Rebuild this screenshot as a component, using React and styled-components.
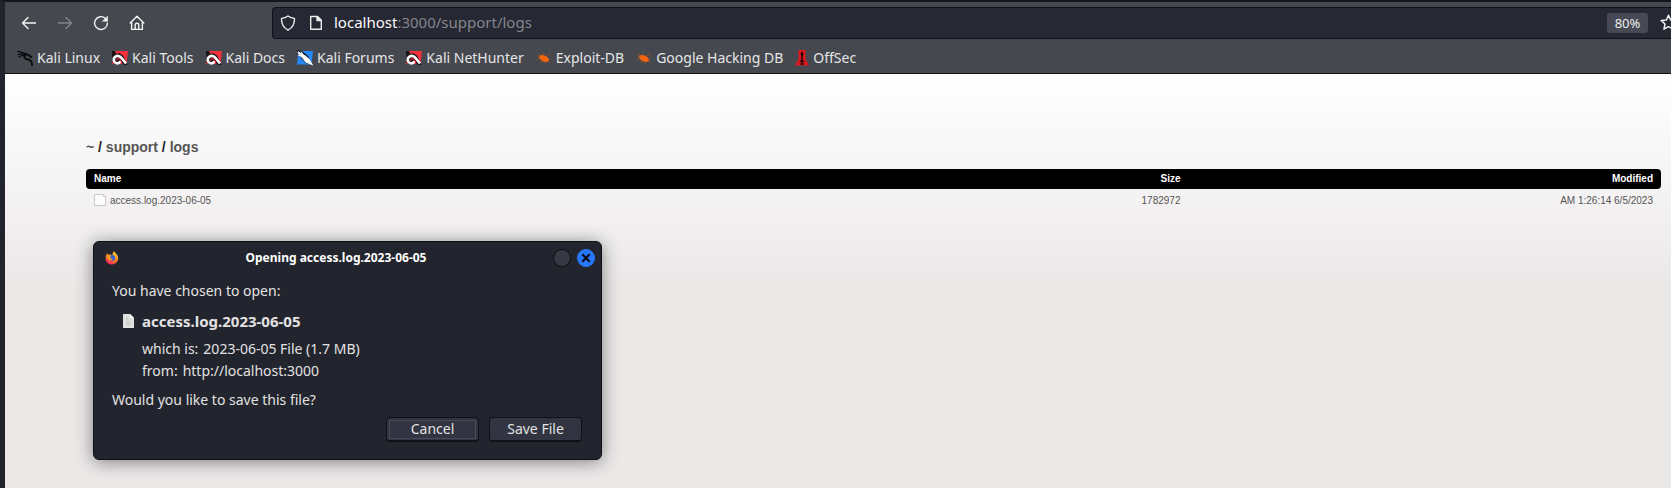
import React from 'react';
import styled, { createGlobalStyle, css } from 'styled-components';

const Global = createGlobalStyle`
  * { box-sizing: border-box; }
  html, body { margin: 0; height: 100%; }
  body { background: #ebe9e8; overflow: hidden; }
  #root { height: 100%; }
`;

const uiFont = css`font-family: "Noto Sans", "Open Sans", sans-serif;`;

const Browser = styled.div`
  position: relative;
  display: flex;
  flex-direction: column;
  min-height: 100vh;
  border-top: 2px solid #14161c;
  border-left: 5px solid #22242d;
  box-shadow: inset 1px 0 #14161c;
`;
const Chrome = styled.header`
  ${uiFont}
  background: #45484f;
  border-bottom: 1px solid #0e0f13;
  color: #eceded;
`;
const NavRow = styled.div`
  display: flex;
  align-items: center;
  height: 38px;
  padding-top: 3px;
`;
const NavButtons = styled.nav`
  display: flex;
  gap: 20px;
  width: 267px;
  padding-left: 16px;
`;
const IconButton = styled.button`
  display: flex;
  padding: 0;
  border: 0;
  background: none;
  color: #f4f4f4;
  opacity: ${(p) => (p.disabled ? 0.35 : 1)};
`;
const UrlBar = styled.div`
  flex: 1;
  display: flex;
  align-items: center;
  height: 32px;
  padding-left: 7px;
  background: #262833;
  border: 1px solid #101218;
  border-right: 0;
  border-radius: 4px 0 0 4px;
  overflow: hidden;
`;
const UrlIcons = styled.div`
  display: flex;
  gap: 12px;
  margin-right: 10px;
`;
const Url = styled.div`
  position: relative;
  flex: 1;
  font-size: 15px;
  line-height: 20px;
  padding-bottom: 2px;
  color: #84858c;
  b { font-weight: 400; color: #fbfbfe; }
`;
const UrlInput = styled.input`
  position: absolute;
  inset: 0;
  width: 100%;
  padding: 0;
  border: 0;
  background: none;
  outline: none;
  color: transparent;
  font: inherit;
`;
const Zoom = styled.button`
  ${uiFont}
  width: 41px;
  height: 20px;
  margin-right: 12px;
  padding: 0;
  border: 0;
  border-radius: 3px;
  background: #474a55;
  color: #eeeeee;
  font-size: 13px;
  line-height: 20px;
`;
const StarButton = styled(IconButton)`
  margin-right: -6px;
`;
const Bookmarks = styled.nav`
  display: flex;
  align-items: center;
  gap: 12px;
  height: 33px;
  padding: 2px 0 0 12px;
`;
const Bookmark = styled.a`
  display: flex;
  align-items: center;
  gap: 4px;
  color: #e6e6e6;
  font-size: 14px;
  line-height: 20px;
  white-space: nowrap;
  text-decoration: none;
`;
const Page = styled.main`
  flex: 1;
  padding: 64px 10px 0 81px;
  background: linear-gradient(#ffffff 0, #f3f1f1 130px, #ebe9e8 210px);
  font-family: "Liberation Sans", Arial, sans-serif;
  font-size: 10px;
  color: #555555;
`;
const Crumbs = styled.h1`
  margin: 0;
  font-size: 14px;
  line-height: 18px;
  color: #222222;
  a { color: #555555; text-decoration: none; }
`;
const Files = styled.table`
  width: 100%;
  margin-top: 13px;
  border-collapse: separate;
  border-spacing: 0;
  table-layout: fixed;
`;
const Head = styled.th`
  height: 20px;
  padding: 0 8px;
  background: #000000;
  color: #ffffff;
  line-height: 18px;
  width: ${(p) => p.$width};
  text-align: ${(p) => p.$align || 'right'};
  &:first-child { border-radius: 4px 0 0 4px; }
  &:last-child { border-radius: 0 4px 4px 0; }
`;
const Cell = styled.td`
  height: 22px;
  padding: 0 8px;
  text-align: ${(p) => p.$align || 'right'};
`;
const FileLink = styled.a`
  display: flex;
  align-items: center;
  gap: 4px;
  color: #555555;
  text-decoration: none;
`;
const Dialog = styled.section`
  ${uiFont}
  position: absolute;
  left: 88px;
  top: 239px;
  width: 509px;
  padding-bottom: 17px;
  background: #23252e;
  border: 1px solid #0f1116;
  border-radius: 6px;
  box-shadow: 0 2px 18px rgba(0, 0, 0, 0.45);
  color: #e2e2e2;
  font-size: 14px;
  line-height: 22px;
`;
const TitleBar = styled.header`
  display: flex;
  align-items: center;
  height: 31px;
  padding: 0 6px 0 11px;
`;
const Title = styled.h2`
  flex: 1;
  margin: 0;
  text-align: center;
  font-size: 12px;
  line-height: 20px;
  color: #ffffff;
`;
const WindowButtons = styled.div`
  display: flex;
  gap: 6px;
`;
const RoundButton = styled.button`
  display: flex;
  align-items: center;
  justify-content: center;
  width: 18px;
  height: 18px;
  padding: 0;
  border: 1px solid ${(p) => (p.$primary ? '#2777ff' : '#0b0c10')};
  border-radius: 50%;
  background: ${(p) => (p.$primary ? '#2777ff' : '#363944')};
  color: #0b0c14;
`;
const Body = styled.div`
  padding: 7px 19px 0 18px;
  p { margin: 0; }
`;
const FileName = styled.p`
  display: flex;
  align-items: center;
  gap: 7px;
  padding: 8px 0 6px 10px;
  font-size: 15px;
  font-weight: 700;
`;
const Details = styled.dl`
  margin: 0 0 7px 30px;
  div { display: flex; gap: 5px; }
  dt, dd { margin: 0; }
`;
const Actions = styled.div`
  display: flex;
  justify-content: flex-end;
  gap: 10px;
  padding-top: 6px;
`;
const Button = styled.button`
  ${uiFont}
  width: 93px;
  height: 25px;
  padding: 0;
  border: 1px solid #0f1116;
  border-bottom-width: 2px;
  border-radius: 4px;
  background: #323541;
  color: #e2e2e2;
  font-size: 14px;
  line-height: 20px;
  outline: ${(p) => (p.$focused ? '1px solid #484b57' : 'none')};
  outline-offset: -4px;
`;

const line = { fill: 'none', stroke: 'currentColor', strokeWidth: 1.4, strokeLinecap: 'round', strokeLinejoin: 'round' };
const Back = () => <svg width="16" height="16" viewBox="0 0 16 16" {...line}><path d="M14.5 8H1.7M7 2.5 1.5 8 7 13.5" /></svg>;
const Forward = () => <svg width="16" height="16" viewBox="0 0 16 16" {...line}><path d="M1.5 8h12.8M9 2.5 14.5 8 9 13.5" /></svg>;
const Reload = () => <svg width="16" height="16" viewBox="0 0 16 16" {...line}><path d="M14.4 8.2A6.4 6.4 0 1 1 12.5 3.5L14 5" /><path d="M14.5 1.5v4.8H9.7z" fill="currentColor" strokeWidth=".6" /></svg>;
const Home = () => <svg width="16" height="16" viewBox="0 0 16 16" {...line}><path d="M1.2 8 8 1.3 14.8 8M2.6 7v7.4h10.8V7M6.2 14.2V10a1.8 1.8 0 0 1 3.6 0v4.2" /></svg>;
const Shield = () => <svg width="16" height="16" viewBox="0 0 16 16" {...line}><path d="M8 1c2 1.5 4 2.2 6.500 2.400C14.700 8.500 13 12.500 8 15.200 3 12.500 1.300 8.500 1.500 3.400 4 3.200 6 2.500 8 1z" /></svg>;
const PageIcon = () => <svg width="16" height="16" viewBox="0 0 16 16" {...line}><path d="M3.500 1.500h6l3.800 3.800v9H2.700V1.500z" /><path d="M9 1.500v4h4.300z" fill="currentColor" /></svg>;
const Star = () => <svg width="17" height="17" viewBox="0 0 16 16" {...line}><path d="m8 1.200 2 4.400 4.900.5-3.600 3.300 1 4.900L8 11.800l-4.300 2.500 1-4.900L1.100 6.100 6 5.600z" /></svg>;

const Dragon = () => (
  <svg width="16" height="16" viewBox="0 0 16 16" fill="none" stroke="#08090b" strokeLinecap="round">
    <path d="M.5 1.500c3.500.2 6.500 1 9 3.200M1 4.500c3-1 5-.8 7 0M2 7c2-1.600 4-1.700 6-1.500" strokeWidth="1.200" />
    <path d="M8 3.500c1.200.9 3.500.6 5 2.500l2 1.200-2-.3" strokeWidth="1.600" />
    <path d="M8.500 4.500c-2.500 3-.5 4.700 2.500 5 2.500.3 4 1.500 4 5.500" strokeWidth="1.800" />
  </svg>
);
const KaliTool = () => (
  <svg width="16" height="16" viewBox="0 0 16 16">
    <path d="M3 1h13l-1.500 13H0z" fill="#f6313f" />
    <path d="M0 1h3l1.500 3L0 7z" fill="#191517" />
    <path d="M0 9 2.500 5 7 3l4 2.500L15.500 15H12l-3-3-4 3-4-2z" fill="#191517" />
    <path d="M14 13.500 10 8.500C8 5.800 5 5 3 7c-2.200 2.200-1.300 5.600 1.500 6.300 1.800.4 3.500-.8 3.800-2.300" fill="none" stroke="#fff" strokeWidth="2.600" />
    <path d="M5 10.800c-.5-2 1-3 2.700-1.800L10 12.500" fill="none" stroke="#d32b3c" strokeWidth="1.200" />
  </svg>
);
const KaliForum = () => (
  <svg width="16" height="16" viewBox="0 0 16 16">
    <path d="M1.500 1H16l-1.500 13.500H0z" fill="#2587f6" />
    <path d="M0 0 5 1l6 5 4.500 9-7-2-6-7z" fill="#10151d" />
    <path d="m1 2 7 4 4 3.500 3 5-6-2.500-3-4z" fill="#fff" stroke="#fff" strokeWidth="1.200" />
    <path d="M4 1.500 7 6M1 5l5 2" stroke="#fff" />
  </svg>
);
const Bug = () => (
  <svg width="16" height="16" viewBox="0 0 16 16" stroke="#b5561f" strokeWidth=".6">
    <ellipse cx="8" cy="8.500" rx="5.300" ry="2.900" transform="rotate(25 8 8.500)" fill="#f3650f" stroke="none" />
    <path d="M4 6 2.500 3.500M7 6l1-3M10 7l2-2.500 2-.3M4 8.500 1 9.500M7 11l-3 2M10 11.500l-1 2M12 9l3 .3M1.500 6l3 .5M12.500 11l1 2" fill="none" />
  </svg>
);
const OffSec = () => (
  <svg width="14" height="16" viewBox="0 0 14 16">
    <path d="M3.500 0h7v9l3.500 6.500H0L3.500 9z" fill="#df1820" />
    <path d="M7 1.500 5.700 3v2l.5 1v4L4 12h6l-2.200-2V6l.5-1V3z" fill="#240708" />
    <path d="M7 10v5M5 14h4" stroke="#240708" strokeWidth="1.200" />
  </svg>
);
const FileGlyph = () => (
  <svg width="12" height="12" viewBox="0 0 12 12"><path d="M.5.5h9l2 2v9H.5z" fill="#fcfcfc" stroke="#c8c8c8" /><path d="M9.500.5v2h2" fill="#eee" stroke="#ccc" /></svg>
);
const DocGlyph = () => (
  <svg width="13" height="14" viewBox="0 0 13 14"><path d="M1 0h7l4 4v10H1z" fill="#e0e0de" /><path d="M8 0v4h4z" fill="#fff" /><path d="M4 4h2M4 6h3M4 8.500h5M4 10.500h5" stroke="#c4c4c3" /></svg>
);
const Firefox = () => (
  <svg width="14" height="14" viewBox="0 0 16 16">
    <defs><linearGradient id="fox" x1=".8" y1="0" x2=".3" y2="1"><stop offset="0" stopColor="#ffe13a" /><stop offset=".5" stopColor="#ff8a1f" /><stop offset="1" stopColor="#f5205e" /></linearGradient></defs>
    <path d="M2.500 2.500 4 4.500l2-.8L8 5l2-5 3 3.500c2.500 3 2.600 6 1 8.500-3 4.500-9 4.500-12 .8C-.3 9.800.8 5 2.500 2.500z" fill="url(#fox)" />
    <path d="M6 5.500c2.500-2 6-.2 5.700 3-.4 3-4.500 3.700-6 1.200 1.500.5 2.800 0 3.300-1H6z" fill="#315fd6" />
    <path d="M2.500 4.500 5 5l2 .5-1.500 2C6 9 7.500 9 9 8.500c-1 2.500-4.500 2.700-6 .2z" fill="#ffa21f" />
  </svg>
);
const Cross = () => <svg width="10" height="10" viewBox="0 0 10 10" stroke="currentColor" strokeWidth="2.200"><path d="m1.300 1.300 7.400 7.400M8.700 1.300 1.300 8.700" /></svg>;

const bookmarks = [
  ['Kali Linux', Dragon], ['Kali Tools', KaliTool], ['Kali Docs', KaliTool], ['Kali Forums', KaliForum],
  ['Kali NetHunter', KaliTool], ['Exploit-DB', Bug], ['Google Hacking DB', Bug], ['OffSec', OffSec],
];

export default function App() {
  return (
    <Browser>
      <Global />
      <Chrome>
        <NavRow>
          <NavButtons>
            <IconButton aria-label="Back"><Back /></IconButton>
            <IconButton aria-label="Forward" disabled><Forward /></IconButton>
            <IconButton aria-label="Reload"><Reload /></IconButton>
            <IconButton aria-label="Home"><Home /></IconButton>
          </NavButtons>
          <UrlBar>
            <UrlIcons><Shield /><PageIcon /></UrlIcons>
            <Url>
              <b>localhost</b>:3000/support/logs
              <UrlInput aria-label="Address" />
            </Url>
            <Zoom>80%</Zoom>
            <StarButton aria-label="Bookmark this page"><Star /></StarButton>
          </UrlBar>
        </NavRow>
        <Bookmarks>
          {bookmarks.map(([name, Icon]) => (
            <Bookmark href="#" key={name}><Icon />{name}</Bookmark>
          ))}
        </Bookmarks>
      </Chrome>
      <Page>
        <Crumbs><a href="#">~</a> / <a href="#">support</a> / <a href="#">logs</a></Crumbs>
        <Files>
          <thead>
            <tr>
              <Head $width="50%" $align="left">Name</Head>
              <Head $width="20%">Size</Head>
              <Head $width="30%">Modified</Head>
            </tr>
          </thead>
          <tbody>
            <tr>
              <Cell $align="left"><FileLink href="#"><FileGlyph />access.log.2023-06-05</FileLink></Cell>
              <Cell>1782972</Cell>
              <Cell>AM 1:26:14 6/5/2023</Cell>
            </tr>
          </tbody>
        </Files>
      </Page>
      <Dialog role="dialog" aria-labelledby="dialog-title">
        <TitleBar>
          <Firefox />
          <Title id="dialog-title">Opening access.log.2023-06-05</Title>
          <WindowButtons>
            <RoundButton aria-label="Maximize" />
            <RoundButton aria-label="Close" $primary><Cross /></RoundButton>
          </WindowButtons>
        </TitleBar>
        <Body>
          <p>You have chosen to open:</p>
          <FileName><DocGlyph />access.log.2023-06-05</FileName>
          <Details>
            <div><dt>which is:</dt><dd>2023-06-05 File (1.7 MB)</dd></div>
            <div><dt>from:</dt><dd>http://localhost:3000</dd></div>
          </Details>
          <p>Would you like to save this file?</p>
          <Actions>
            <Button $focused>Cancel</Button>
            <Button>Save File</Button>
          </Actions>
        </Body>
      </Dialog>
    </Browser>
  );
}
